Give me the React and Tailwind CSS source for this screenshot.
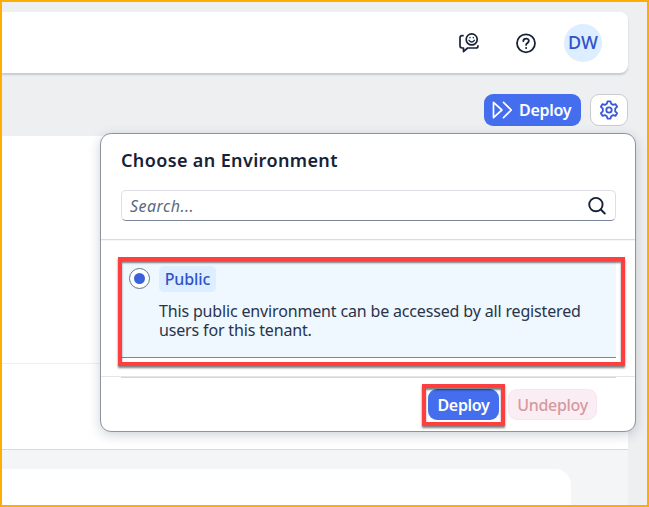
function FeedbackIcon() {
  return (
    <svg className="h-[22px] w-[22px]" viewBox="0 0 22 22" fill="none" stroke="#172237" strokeWidth="1.700" strokeLinecap="round" strokeLinejoin="round">
      <path d="M5 3.700H4.200Q2 3.700 2 5.900v7.900Q2 16 4.200 16h1.300v3.600L9.600 16h8.200q2.200 0 2.200-2.100" />
      <circle cx="13.700" cy="7.400" r="5.500" />
      <path d="M11 8.300q2.700 3.400 5.400 0" strokeWidth="1.300" />
      <path d="M12 5.500v.3M15.300 5.500v.3" strokeWidth="1.300" />
    </svg>
  );
}

function HelpIcon() {
  return (
    <svg className="h-[22px] w-[22px]" viewBox="0 0 22 22" fill="none" stroke="#172237" strokeWidth="1.800" strokeLinecap="round" strokeLinejoin="round">
      <circle cx="11" cy="11.300" r="9" />
      <path d="M8.300 9.100c.1-3.500 5.600-3.300 5.500-.2 0 2-2.700 2.100-2.700 4" />
      <path d="M11.100 15.900v.1" strokeWidth="2" />
    </svg>
  );
}

function ForwardIcon() {
  return (
    <svg className="h-5 w-[22px] shrink-0" viewBox="0 0 22 20" fill="none" stroke="#fff" strokeWidth="1.700" strokeLinecap="round" strokeLinejoin="round">
      <path d="M2.500 2.300v15.400l8.400-7.700z" />
      <path d="M12.500 2.300l7.800 7.700-7.800 7.700" />
    </svg>
  );
}

function GearIcon() {
  return (
    <svg className="h-5 w-5" viewBox="0 0 20 20" fill="none" stroke="#3759d3" strokeWidth="1.800" strokeLinejoin="round">
      <path d="M8.500 1.400h3l.7 2.400 1.900 1.100 2.500-.7 1.500 2.600-1.900 1.900v2.600l1.900 1.900-1.500 2.600-2.500-.7-1.900 1.100-.7 2.400h-3l-.7-2.400-1.900-1.100-2.500.7-1.500-2.600 1.900-1.900V8.700L1.900 6.800l1.500-2.600 2.500.7 1.900-1.100z" />
      <circle cx="10" cy="10" r="2.700" />
    </svg>
  );
}

function SearchIcon() {
  return (
    <svg className="h-5 w-5" viewBox="0 0 20 20" fill="none" stroke="#172237" strokeWidth="1.900" strokeLinecap="round">
      <circle cx="8.900" cy="8.600" r="6.700" />
      <path d="M13.800 13.500l4 4" />
    </svg>
  );
}

function EnvironmentPopover() {
  return (
    <section className="absolute left-[98px] top-[131px] flex h-[299px] w-[536px] flex-col rounded-[11px] border-[1.500px] border-[#8e949f] bg-white shadow-[0_3px_12px_rgba(34,53,72,0.22)]">
      <div className="flex h-[106px] flex-col border-b border-[#d9dbdd] px-5 pt-[14px] shadow-[0_1px_1px_rgba(0,0,0,0.04)]">
        <h2 className="h-6 whitespace-nowrap text-[18px] font-semibold leading-6 tracking-[0.370px] text-[#172237]">Choose an Environment</h2>
        <div className="mt-[18px] flex h-[31px] w-[495px] items-center justify-between rounded-[5px] border border-[#dcdfe6] border-b-[#788497] pl-[8px] pr-2">
          <span className="text-[16px] italic tracking-[0.450px] text-[#5b697f]">Search...</span>
          <SearchIcon />
        </div>
      </div>
      <div className="h-[138px] px-5 pt-5">
        <div className="flex h-[98px] w-[495px] border-b-[1.500px] border-[#6385df] bg-[#eff7ff] pl-2 pt-[6px]">
          <span className="mt-[2px] flex h-[21px] w-[21px] shrink-0 items-center justify-center rounded-full border border-[#65758e] bg-white">
            <span className="h-[11px] w-[11px] rounded-full bg-[#3b63d9]" />
          </span>
          <div className="ml-[9px]">
            <span className="flex h-[26px] w-[57px] items-center justify-center rounded-[5px] bg-[#dceeff] text-[16px] font-medium tracking-[-0.100px] text-[#3152ca]">Public</span>
            <p className="mt-[10px] whitespace-nowrap text-[16px] leading-[19px] tracking-[-0.160px] text-[#28344a]">
              This public environment can be accessed by all registered
              <br />
              users for this tenant.
            </p>
          </div>
        </div>
        <div className="-mx-5 mt-[18px] h-px bg-[#e4e5e7]" />
        <div className="h-px w-[495px] bg-[#d3d5d8]" />
      </div>
      <div className="flex flex-1 gap-[9px] pl-[327px] pt-[11px]">
        <button className="flex h-[31px] w-[71px] items-center justify-center rounded-[9px] bg-[#456eee] text-[16px] font-semibold tracking-[-0.300px] text-white">Deploy</button>
        <button className="flex h-[31px] w-[89px] items-center justify-center rounded-[9px] border border-[#f8e5f0] bg-[#faedf4] text-[16px] font-medium tracking-[-0.300px] text-[#d59a9e]">Undeploy</button>
      </div>
      <div className="pointer-events-none absolute left-[17px] top-[123px] h-[109px] w-[507px] border-4 border-[#ff3f3f] shadow-[0_2px_2px_rgba(0,0,0,0.5),inset_0_2px_2px_rgba(0,0,0,0.5)]" />
      <div className="pointer-events-none absolute left-[321px] top-[250px] h-[42px] w-[83px] border-4 border-[#ff3f3f] shadow-[0_2px_2px_rgba(0,0,0,0.5),inset_0_2px_2px_rgba(0,0,0,0.5)]" />
    </section>
  );
}

export default function App() {
  return (
    <div className="relative h-[507px] w-[649px] overflow-hidden border-2 border-[#ffad00] bg-[#eeeff1] pt-[10px] font-['Noto_Sans',sans-serif]">
      <header className="flex h-[61px] w-[626px] items-center rounded-r-[8px] bg-white pl-[456px] shadow-[0_2px_2px_rgba(80,90,105,0.25)]">
        <FeedbackIcon />
        <span className="ml-[35px] h-[22px]"><HelpIcon /></span>
        <span className="ml-[27px] flex h-[38px] w-[38px] items-center justify-center rounded-full bg-[#dceeff] text-[18px] font-medium text-[#3152ca]">DW</span>
      </header>
      <div className="flex h-[63px] w-[626px] justify-end gap-[9px] pt-[21px]">
        <button className="flex h-[32px] w-[97px] items-center gap-[6px] rounded-[9px] bg-[#456eee] pl-[7px] text-[16px] font-semibold tracking-[-0.300px] text-white">
          <ForwardIcon />
          Deploy
        </button>
        <button className="flex h-[32px] w-[38px] items-center justify-center rounded-[9px] border border-[#c8ccd1] bg-white"><GearIcon /></button>
      </div>
      <main className="w-[626px] bg-white">
        <div className="h-[228px] border-b border-[#eeeeef]" />
        <div className="h-[86px] border-b border-[#d8dadd]" />
        <div className="h-[57px] bg-[#f4f5f7] pt-[19px]">
          <div className="h-[38px] w-[569px] rounded-tr-[16px] bg-white" />
        </div>
      </main>
      <EnvironmentPopover />
    </div>
  );
}
